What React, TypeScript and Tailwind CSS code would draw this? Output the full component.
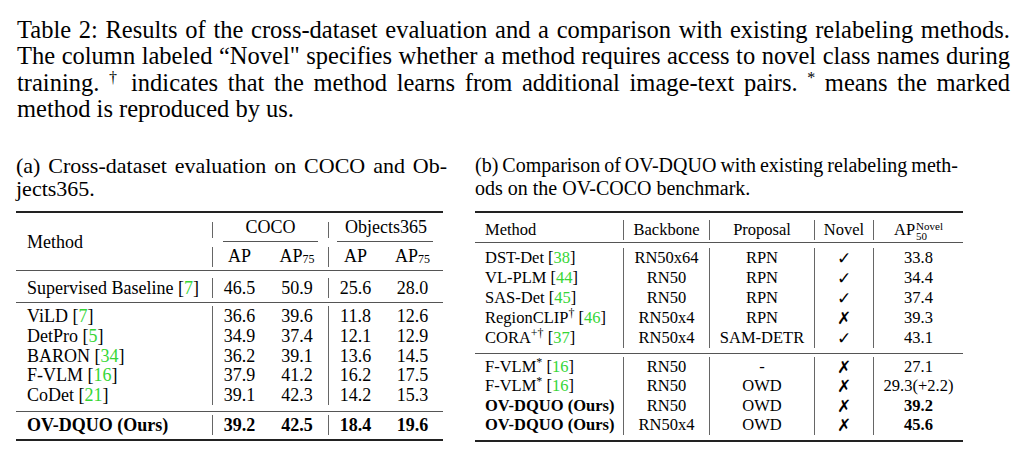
import { Fragment, ReactNode } from "react";

const green = "text-[#36d636]";

function Ref({ n }: { n: string }) {
  return (
    <>
      [<span className={green}>{n}</span>]
    </>
  );
}

function Check({ ok }: { ok: boolean }) {
  return (
    <span className="font-['DejaVu_Sans',sans-serif] font-bold text-[17px]">
      {ok ? "✓" : "✗"}
    </span>
  );
}

// one block of body rows, columns laid out side by side with bars between
function Block({
  cols,
  cells,
  rows,
  bars,
  rowH,
  pad,
}: {
  cols: string[];
  cells: string[];
  rows: ReactNode[][];
  bars: number[];
  rowH: string;
  pad: string;
}) {
  return (
    <div className={pad}>
      <div className="flex">
        {cols.map((c, ci) => (
          <Fragment key={ci}>
            {bars.includes(ci) && <div className="w-px bg-[#666]" />}
            <div className={`flex flex-col ${c}`}>
              {rows.map((r, ri) => (
                <div
                  key={ri}
                  className={`flex items-center whitespace-nowrap ${rowH} ${cells[ci]}`}
                >
                  {r[ci]}
                </div>
              ))}
            </div>
          </Fragment>
        ))}
      </div>
    </div>
  );
}

const colsA = ["w-[196px]", "w-[53px]", "w-[62px]", "w-[53px]", "w-[61px]"];
const cellsA = ["pl-[11px]", "justify-center", "justify-center", "justify-center", "justify-center"];

const rowsA: [string, string, string, string, string, string][] = [
  ["ViLD", "7", "36.6", "39.6", "11.8", "12.6"],
  ["DetPro", "5", "34.9", "37.4", "12.1", "12.9"],
  ["BARON", "34", "36.2", "39.1", "13.6", "14.5"],
  ["F-VLM", "16", "37.9", "41.2", "16.2", "17.5"],
  ["CoDet", "21", "39.1", "42.3", "14.2", "15.3"],
];

const colsB = ["w-[148px]", "w-[85px]", "w-[104px]", "w-[58px]", "w-[89px]"];
const cellsB = ["pl-[10px]", "justify-center", "justify-center", "justify-center", "justify-center"];

type RowB = {
  name: string;
  sup?: string;
  cite?: string;
  bb: string;
  prop: string;
  novel: boolean;
  ap: string;
  bold?: boolean;
};

const groupB1: RowB[] = [
  { name: "DST-Det", cite: "38", bb: "RN50x64", prop: "RPN", novel: true, ap: "33.8" },
  { name: "VL-PLM", cite: "44", bb: "RN50", prop: "RPN", novel: true, ap: "34.4" },
  { name: "SAS-Det", cite: "45", bb: "RN50", prop: "RPN", novel: true, ap: "37.4" },
  { name: "RegionCLIP", sup: "†", cite: "46", bb: "RN50x4", prop: "RPN", novel: false, ap: "39.3" },
  { name: "CORA", sup: "+†", cite: "37", bb: "RN50x4", prop: "SAM-DETR", novel: true, ap: "43.1" },
];

const groupB2: RowB[] = [
  { name: "F-VLM", sup: "*", cite: "16", bb: "RN50", prop: "-", novel: false, ap: "27.1" },
  { name: "F-VLM", sup: "*", cite: "16", bb: "RN50", prop: "OWD", novel: false, ap: "29.3(+2.2)" },
  { name: "OV-DQUO (Ours)", bb: "RN50", prop: "OWD", novel: false, ap: "39.2", bold: true },
  { name: "OV-DQUO (Ours)", bb: "RN50x4", prop: "OWD", novel: false, ap: "45.6", bold: true },
];

function toCells(r: RowB): ReactNode[] {
  return [
    <span className={r.bold ? "font-bold" : ""}>
      {r.name}
      {r.sup && <sup className="text-[12px]">{r.sup}</sup>}
      {r.cite && (
        <>
          {" "}
          <Ref n={r.cite} />
        </>
      )}
    </span>,
    r.bb,
    r.prop,
    <Check ok={r.novel} />,
    <span className={r.bold ? "font-bold" : ""}>{r.ap}</span>,
  ];
}

function TableA() {
  return (
    <div className="w-[427px] text-[18px] leading-[20px]">
      <div className="h-[2px] bg-[#222]" />
      <div className="flex h-[57px]">
        <div className="w-[196px] pl-[11px] flex items-center">Method</div>
        <div className="w-px flex flex-col">
          <div className="mt-[9px] h-[16px] bg-[#666]" />
          <div className="mt-[9px] h-[20px] bg-[#666]" />
        </div>
        <div className="w-[115px] flex flex-col">
          <div className="h-[28px] flex items-center justify-center">COCO</div>
          <div className="mx-[10px] h-px bg-[#555]" />
          <div className="h-[28px] flex">
            <div className="w-[53px] flex items-center justify-center">AP</div>
            <div className="w-[62px] flex items-center justify-center">
              AP<sub className="text-[12px]">75</sub>
            </div>
          </div>
        </div>
        <div className="w-px flex flex-col">
          <div className="mt-[9px] h-[16px] bg-[#666]" />
          <div className="mt-[9px] h-[20px] bg-[#666]" />
        </div>
        <div className="w-[114px] flex flex-col">
          <div className="h-[28px] flex items-center justify-center">Objects365</div>
          <div className="ml-[8px] mr-[10px] h-px bg-[#555]" />
          <div className="h-[28px] flex">
            <div className="w-[53px] flex items-center justify-center">AP</div>
            <div className="w-[61px] flex items-center justify-center">
              AP<sub className="text-[12px]">75</sub>
            </div>
          </div>
        </div>
      </div>
      <div className="h-px bg-[#555]" />
      <Block
        cols={colsA}
        cells={cellsA}
        bars={[1, 3]}
        rowH="h-[20px]"
        pad="pt-[7px] pb-[4px]"
        rows={[
          [
            <span>
              Supervised Baseline <Ref n="7" />
            </span>,
            "46.5",
            "50.9",
            "25.6",
            "28.0",
          ],
        ]}
      />
      <div className="h-px bg-[#555]" />
      <Block
        cols={colsA}
        cells={cellsA}
        bars={[1, 3]}
        rowH="h-[19.75px]"
        pad="pt-[3px] pb-[6px]"
        rows={rowsA.map((r) => [
          <span>
            {r[0]} <Ref n={r[1]} />
          </span>,
          r[2],
          r[3],
          r[4],
          r[5],
        ])}
      />
      <div className="h-px bg-[#555]" />
      <Block
        cols={colsA}
        cells={cellsA}
        bars={[1, 3]}
        rowH="h-[20px]"
        pad="pt-[3px] pb-[4px]"
        rows={[
          ["OV-DQUO (Ours)", "39.2", "42.5", "18.4", "19.6"].map((t) => (
            <span className="font-bold">{t}</span>
          )),
        ]}
      />
      <div className="h-[2px] bg-[#222]" />
    </div>
  );
}

function TableB() {
  return (
    <div className="w-[488px] text-[16.5px] leading-[20px]">
      <div className="h-[2px] bg-[#222]" />
      <Block
        cols={colsB}
        cells={cellsB}
        bars={[1, 2, 3, 4]}
        rowH="h-[20px]"
        pad="pt-[7px] pb-[2px]"
        rows={[
          [
            "Method",
            "Backbone",
            "Proposal",
            "Novel",
            <span className="flex items-center">
              AP
              <span className="inline-flex flex-col text-[11px] leading-[10px] mt-[2px] ml-px">
                <span>Novel</span>
                <span>50</span>
              </span>
            </span>,
          ],
        ]}
      />
      <div className="h-px bg-[#555]" />
      <Block
        cols={colsB}
        cells={cellsB}
        bars={[1, 2, 3, 4]}
        rowH="h-[20px]"
        pad="pt-[5px] pb-[5px]"
        rows={groupB1.map(toCells)}
      />
      <div className="h-px bg-[#555]" />
      <Block
        cols={colsB}
        cells={cellsB}
        bars={[1, 2, 3, 4]}
        rowH="h-[19.33px]"
        pad="pt-[3px] pb-[5px]"
        rows={groupB2.map(toCells)}
      />
      <div className="h-[2px] bg-[#222]" />
    </div>
  );
}

export default function App() {
  const line = "text-justify [text-align-last:justify] whitespace-nowrap";
  return (
    <div className="w-[1024px] h-[462px] bg-white text-black font-['Liberation_Serif','Times_New_Roman',serif] pt-[17px] overflow-hidden">
      <div className="ml-[17px] w-[993px] text-[24.5px] leading-[26.3px] [word-spacing:-1px]">
        <p className={line}>
          Table 2: Results of the cross-dataset evaluation and a comparison with existing relabeling methods.
        </p>
        <p className={line}>
          The column labeled “Novel" specifies whether a method requires access to novel class names during
        </p>
        <p className={line}>
          training. <sup className="text-[16px]">†</sup> indicates that the method learns from additional
          image-text pairs. <sup className="text-[16px]">*</sup> means the marked
        </p>
        <p className="[word-spacing:0px]">method is reproduced by us.</p>
      </div>

      <div className="flex items-start mt-[32px]">
        <div className="ml-[16px] w-[431px]">
          <div className="text-[22px] leading-[23px]">
            <p className={line}>(a) Cross-dataset evaluation on COCO and Ob-</p>
            <p>jects365.</p>
          </div>
          <div className="mt-[11px]">
            <TableA />
          </div>
        </div>
        <div className="ml-[28px] w-[488px]">
          <div className="w-[483px] text-[20px] leading-[23px]">
            <p className={`${line} [word-spacing:-1.5px]`}>
              (b) Comparison of OV-DQUO with existing relabeling meth-
            </p>
            <p>ods on the OV-COCO benchmark.</p>
          </div>
          <div className="mt-[11px]">
            <TableB />
          </div>
        </div>
      </div>
    </div>
  );
}
